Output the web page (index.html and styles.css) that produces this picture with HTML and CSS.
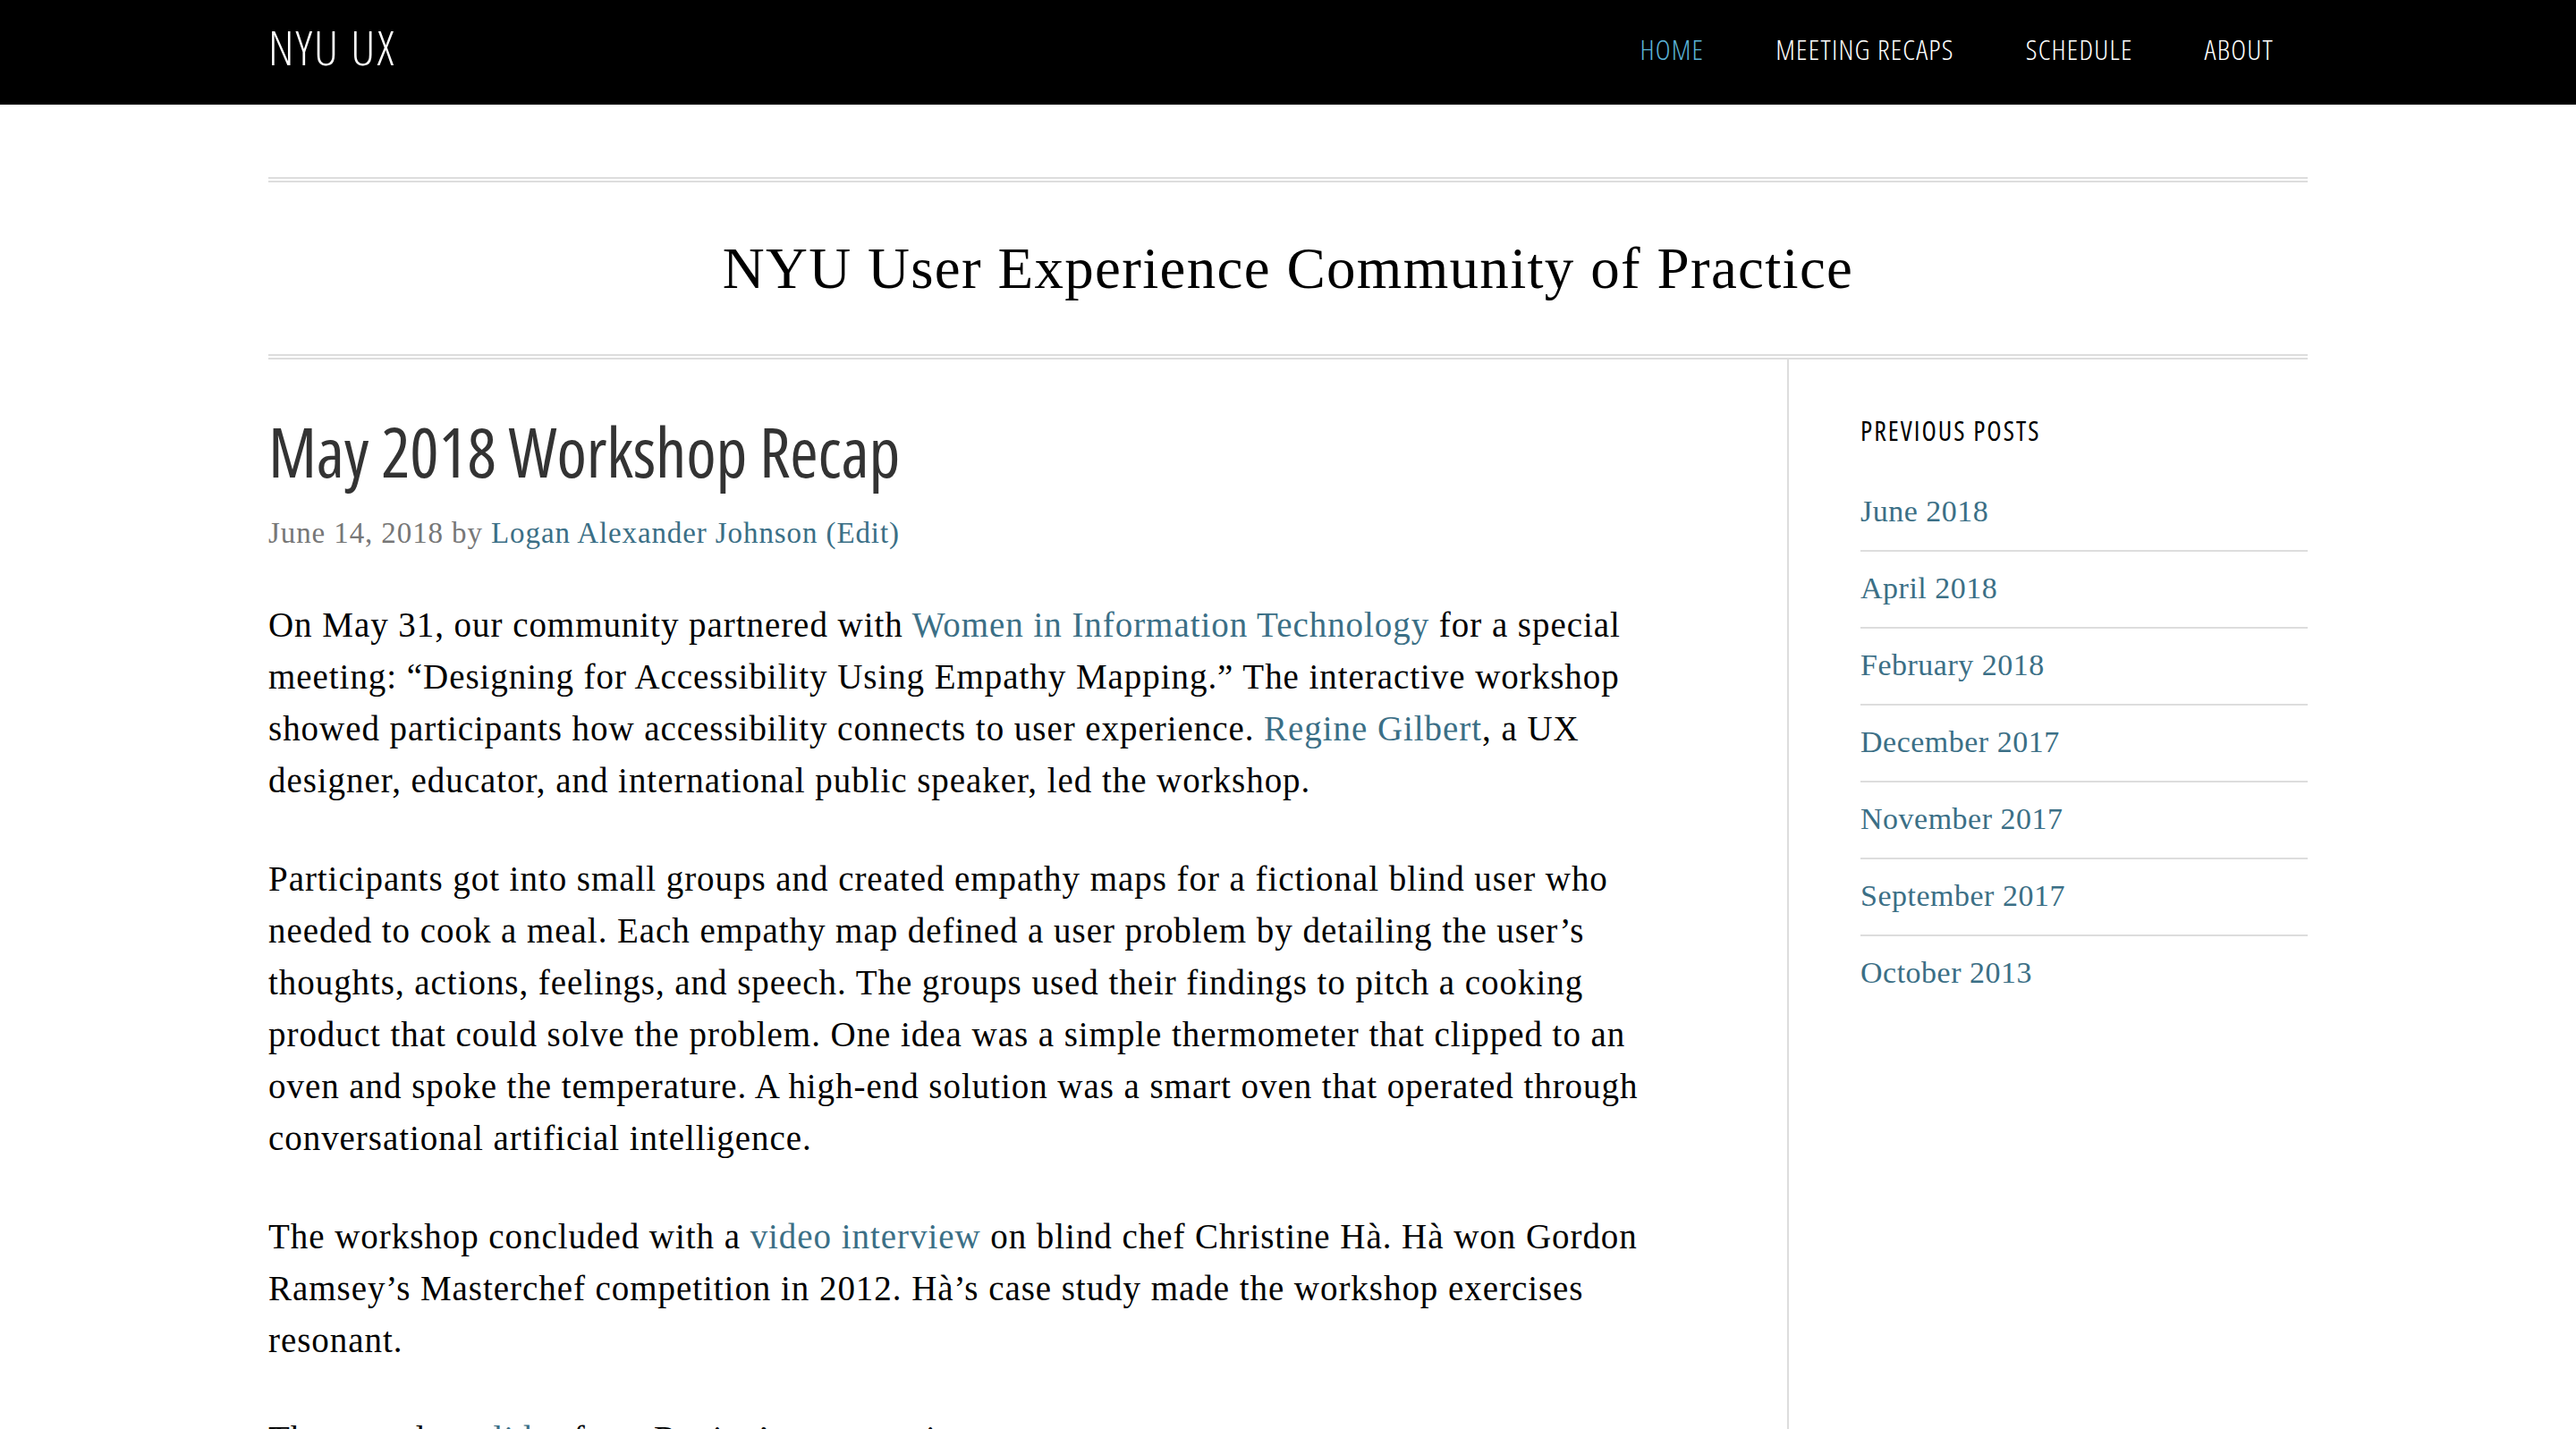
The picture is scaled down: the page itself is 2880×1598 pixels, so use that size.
FILE: index.html
```html
<!DOCTYPE html>
<html lang="en">
<head>
<meta charset="utf-8">
<title>May 2018 Workshop Recap – NYU UX</title>
<link rel="stylesheet" href="styles.css">
</head>
<body>
<header class="site-header">
  <div class="wrap header-inner">
    <a class="site-title" href="#">NYU UX</a>
    <nav class="nav-primary">
      <ul class="menu">
        <li class="menu-item current"><a href="#">HOME</a></li>
        <li class="menu-item"><a href="#">MEETING RECAPS</a></li>
        <li class="menu-item"><a href="#">SCHEDULE</a></li>
        <li class="menu-item"><a href="#">ABOUT</a></li>
      </ul>
    </nav>
  </div>
</header>

<div class="wrap">
  <div class="site-description">
    <p class="description">NYU User Experience Community of Practice</p>
  </div>

  <div class="content-sidebar">
    <main class="content">
      <article class="entry">
        <h1 class="entry-title">May 2018 Workshop Recap</h1>
        <p class="entry-meta">June 14, 2018 by <a href="#">Logan Alexander Johnson</a> <a href="#">(Edit)</a></p>
        <div class="entry-content">
          <p>On May 31, our community partnered with <a href="#">Women in Information Technology</a> for a special meeting: “Designing for Accessibility Using Empathy Mapping.” The interactive workshop showed participants how accessibility connects to user experience. <a href="#">Regine Gilbert</a>, a UX designer, educator, and international public speaker, led the workshop.</p>
          <p>Participants got into small groups and created empathy maps for a fictional blind user who needed to cook a meal. Each empathy map defined a user problem by detailing the user’s thoughts, actions, feelings, and speech. The groups used their findings to pitch a cooking product that could solve the problem. One idea was a simple thermometer that clipped to an oven and spoke the temperature. A high-end solution was a smart oven that operated through conversational artificial intelligence.</p>
          <p>The workshop concluded with a <a href="#">video interview</a> on blind chef Christine Hà. Hà won Gordon Ramsey’s Masterchef competition in 2012. Hà’s case study made the workshop exercises resonant.</p>
          <p>The complete <a href="#">slides</a> from Regine’s presentation.</p>
        </div>
      </article>
    </main>

    <aside class="sidebar">
      <section class="widget">
        <h4 class="widget-title">PREVIOUS POSTS</h4>
        <ul class="archive-list">
          <li><a href="#">June 2018</a></li>
          <li><a href="#">April 2018</a></li>
          <li><a href="#">February 2018</a></li>
          <li><a href="#">December 2017</a></li>
          <li><a href="#">November 2017</a></li>
          <li><a href="#">September 2017</a></li>
          <li><a href="#">October 2013</a></li>
        </ul>
      </section>
    </aside>
  </div>
</div>
</body>
</html>
```
FILE: styles.css
```css
* {
  box-sizing: border-box;
}

html, body {
  margin: 0;
  padding: 0;
  background: #fff;
}

body {
  font-family: "Liberation Serif", "Times New Roman", serif;
  color: #000;
}

a {
  color: #3b6f86;
  text-decoration: none;
}

.wrap {
  width: 2280px;
  margin: 0 auto;
}

/* Condensed display face (Oswald stand-in) */
.site-title,
.menu-item a,
.entry-title,
.widget-title {
  font-family: "Open Sans", "Roboto Condensed", sans-serif;
  font-stretch: 75%;
}

/* Header */
.site-header {
  background: #000;
  height: 117px;
}

.header-inner {
  height: 117px;
  padding-bottom: 8px;
  display: flex;
  align-items: center;
  justify-content: space-between;
}

.site-title {
  margin-bottom: 5px;
  font-size: 54px;
  line-height: 54px;
  font-weight: 300;
  letter-spacing: 2px;
  color: #fff;
}

.menu {
  list-style: none;
  margin: 0;
  padding: 0;
  display: flex;
}

.menu-item a {
  display: block;
  padding: 0 40px;
  font-size: 32px;
  line-height: 32px;
  font-weight: 350;
  letter-spacing: 1.2px;
  color: #fff;
}

.menu-item:last-child a {
  padding-right: 38px;
}

.menu-item.current a {
  color: #5ab2d6;
}

/* Site description band */
.site-description {
  margin-top: 81px;
  border-top: 6px double #ddd;
  border-bottom: 6px double #ddd;
  padding: 60px 0;
  text-align: center;
}

.description {
  margin: 0;
  font-size: 65px;
  line-height: 72px;
  letter-spacing: 1.3px;
  color: #000;
}

/* Columns */
.content-sidebar {
  display: flex;
  align-items: stretch;
}

.content {
  width: 1698px;
  padding: 58px 100px 0 0;
}

.entry-title {
  margin: 0;
  font-weight: 400;
  font-size: 76px;
  line-height: 90px;
  letter-spacing: -0.2px;
  color: #333;
}

.entry-meta {
  margin: 22px 0 0;
  font-size: 33px;
  line-height: 48px;
  letter-spacing: 0.9px;
  color: #777;
}

.entry-content {
  margin-top: 50px;
}

.entry-content p {
  margin: 0 0 52px;
  font-size: 39px;
  line-height: 58px;
  letter-spacing: 0.95px;
}

/* Sidebar */
.sidebar {
  width: 582px;
  border-left: 2px solid #ddd;
  padding: 60px 0 0 80px;
}

.widget-title {
  margin: 0;
  font-weight: 400;
  font-size: 30px;
  line-height: 40px;
  letter-spacing: 2px;
  color: #000;
}

.archive-list {
  list-style: none;
  margin: 44px 0 0;
  padding: 0;
}

.archive-list li {
  font-size: 34px;
  line-height: 52px;
  letter-spacing: 0.5px;
  padding-bottom: 17px;
  margin-bottom: 15px;
  border-bottom: 2px solid #ddd;
}

.archive-list li:last-child {
  border-bottom: none;
}
```
